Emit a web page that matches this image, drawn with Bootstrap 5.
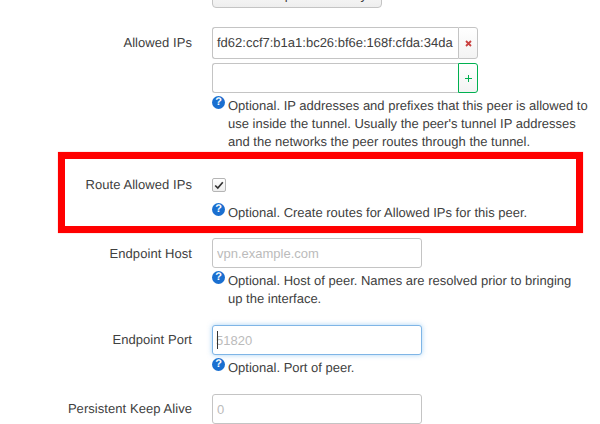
<!DOCTYPE html>
<html><head><meta charset="utf-8">
<link href="https://cdn.jsdelivr.net/npm/bootstrap@5.3.0/dist/css/bootstrap.min.css" rel="stylesheet">
<style>
html,body{height:424px;overflow:hidden;background:#fff}
body{font-family:"Liberation Sans",Arial,sans-serif;font-size:13px;line-height:18px;color:#404040;position:relative;text-rendering:geometricPrecision}
.pane{margin-top:-18px;display:flex;flex-direction:column}
.frow{display:flex}
.h-gen{height:45px}.h-ips{height:125px}.h-route{height:86px}.h-host{height:87px}.h-port{height:69px}
.flabel{width:192px;flex:none;text-align:right;margin-right:20px;letter-spacing:.06px}
.pl-7{padding-top:7px}.pl-6{padding-top:6px}.pl-24{padding-top:24px}.pl-23{padding-top:23px}
.fbody{width:388px;flex:none}
.gen-btn{width:170px;height:26px;padding:0;font-size:13px;line-height:24px;color:#404040;background:linear-gradient(#fff,#eee);border:1px solid #c4c4c4;border-radius:4px;display:block}
.tfield{display:block;width:210px;height:30px;border:1px solid #c4c4c4;border-radius:3px;padding:0 4px;font-size:13px;color:#404040;background:#fff;outline:0}
.tfield::placeholder{color:#bbb;opacity:1}
.tfield.active{border-color:#7fb5e6;box-shadow:0 0 5px rgba(82,168,236,.5);padding:0 3px}
.multi{display:flex;width:266px}
.multi .inner{flex:1;min-width:0;border:1px solid #c4c4c4;border-right:0;border-radius:3px 0 0 3px;padding:0 4px;display:flex;align-items:center;height:32px;background:#fff;white-space:nowrap;font-size:13px}
.multi .inner.blank{height:30px}
.addon{width:20px;flex:none;display:flex;align-items:center;justify-content:center;border:1px solid #c4c4c4;border-radius:0 3px 3px 0;background:linear-gradient(#fff,#f3f3f3)}
.addon.add{border:1px solid #00b050}
.hint{display:flex;width:376px;margin-top:4px;font-size:13px;line-height:18px}
.hint-route{margin-top:12px}
.qmark{flex:none;width:13px;height:13px;margin:-1px 3px 0 0;border-radius:50%;background:#1a6fd0;color:#fff;font:bold 11px/13px "Liberation Sans",sans-serif;text-align:center}
.chk{width:14px;height:14px;border:1px solid #b5b5b5;border-radius:2px;background:linear-gradient(#fff,#eee);display:flex;align-items:center;justify-content:center;margin-top:3px}
.redbox{position:absolute;left:58px;top:152px;width:525px;height:81px;border:7px solid #f00;box-shadow:0 0 1px #f88;pointer-events:none}
.caret-mark{position:absolute;left:217px;top:331px;width:1px;height:18px;background:#333}
</style></head>
<body>
<div class="pane">
  <div class="frow h-gen"><div class="flabel"></div><div class="fbody"><button class="gen-btn" type="button">Generate preshared key</button></div></div>
  <div class="frow h-ips">
    <div class="flabel pl-7">Allowed IPs</div>
    <div class="fbody">
      <div class="multi"><div class="inner">fd62:ccf7:b1a1:bc26:bf6e:168f:cfda:34da</div>
        <div class="addon"><svg width="7" height="7" viewBox="0 0 7 7"><path d="M1 1L6 6M6 1L1 6" stroke="#c9403f" stroke-width="1.8"/></svg></div></div>
      <div class="multi mt-1"><div class="inner blank"></div>
        <div class="addon add"><svg width="9" height="9" viewBox="0 0 9 9"><path d="M4.5 1V8M1 4.5H8" stroke="#00b050" stroke-width="1"/></svg></div></div>
      <div class="hint"><span class="qmark">?</span><span>Optional. IP addresses and prefixes that this peer is allowed to use inside the tunnel. Usually the peer's tunnel IP addresses and the networks the peer routes through the tunnel.</span></div>
    </div>
  </div>
  <div class="frow h-route">
    <div class="flabel pl-24">Route Allowed IPs</div>
    <div class="fbody pl-23">
      <div class="chk"><svg width="10" height="9" viewBox="0 0 10 9"><path d="M1.2 4.5L3.8 7L8.8 1.2" fill="none" stroke="#333" stroke-width="1.7"/></svg></div>
      <div class="hint hint-route"><span class="qmark">?</span><span>Optional. Create routes for Allowed IPs for this peer.</span></div>
    </div>
  </div>
  <div class="frow h-host">
    <div class="flabel pl-7">Endpoint Host</div>
    <div class="fbody">
      <input class="tfield" placeholder="vpn.example.com">
      <div class="hint"><span class="qmark">?</span><span>Optional. Host of peer. Names are resolved prior to bringing up the interface.</span></div>
    </div>
  </div>
  <div class="frow h-port">
    <div class="flabel pl-6">Endpoint Port</div>
    <div class="fbody">
      <input class="tfield active" placeholder="51820">
      <div class="hint"><span class="qmark">?</span><span>Optional. Port of peer.</span></div>
    </div>
  </div>
  <div class="frow">
    <div class="flabel pl-6">Persistent Keep Alive</div>
    <div class="fbody"><input class="tfield" placeholder="0"></div>
  </div>
</div>
<div class="caret-mark"></div>
<div class="redbox"></div>
</body></html>
